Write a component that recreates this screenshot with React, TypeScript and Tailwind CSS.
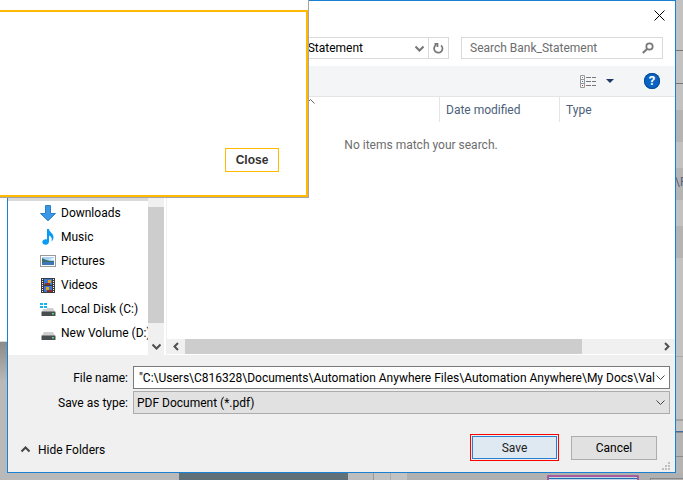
import React from "react";

function Chevron({ dir, className }: { dir: "up" | "down" | "left" | "right"; className?: string }) {
  const d = {
    up: "M.5 6.500 L4.500 2.500 L8.500 6.500",
    down: "M.5 2.500 L4.500 6.500 L8.500 2.500",
    left: "M6 1 L2.5 4.5 L6 8",
    right: "M3 1 L6.5 4.5 L3 8",
  }[dir];
  return (
    <svg viewBox="0 0 9 9" className={"h-[9px] w-[9px] shrink-0 " + (className ?? "")} fill="none" stroke="currentColor" aria-hidden="true">
      <path d={d} />
    </svg>
  );
}

const DownloadIcon = () => (
  <svg viewBox="0 0 16 16" className="h-4 w-4 shrink-0" aria-hidden="true">
    <path d="M5.500 .5h5v8h5L8 15.800.500 8.500h5z" fill="#3a98e6" stroke="#2a7fc9" />
  </svg>
);

const MusicIcon = () => (
  <svg viewBox="0 0 16 16" className="h-4 w-4 shrink-0" aria-hidden="true">
    <path d="M7 0h2c0 3 4.500 4 4.500 8 0 2-1 3.500-2 4.500.8-3 0-5-2.500-6v6c0 2-1.500 3.300-3.500 3.300S2.300 14.500 2.300 13c0-2 2.200-3.200 4.700-2.700z" fill="#0a9bf5" />
  </svg>
);

const PictureIcon = () => (
  <svg viewBox="0 0 16 16" className="h-4 w-4 shrink-0" aria-hidden="true">
    <rect x=".5" y="2.500" width="15" height="11" fill="#fff" stroke="#9a9a9a" />
    <rect x="2" y="4" width="12" height="8" fill="#a9d3f5" />
    <path d="M2 5c3 1 4 3 12 3v2H2z" fill="#3c6f6a" />
    <rect x="2" y="9" width="12" height="3" fill="#3c78b8" />
    <path d="M8 6.500 14 5v2z" fill="#eef7fd" />
  </svg>
);

const VideoIcon = () => (
  <svg viewBox="0 0 16 16" className="h-4 w-4 shrink-0" aria-hidden="true">
    <rect x="1" y="1" width="14" height="15" fill="#3a3a3a" />
    <path d="M2.500 2v14M13.500 2v14" stroke="#fff" strokeDasharray="1 1" />
    <rect x="4" y="2" width="8" height="6" fill="#3b78d8" />
    <rect x="4" y="9" width="8" height="6" fill="#3b78d8" />
    <path d="M8 3h3v3H8zM6 10h3v3H6z" fill="#e3a21a" />
    <path d="M5 6h5v2H5zM7 13h5v2H7z" fill="#8c2f22" />
  </svg>
);

function DriveIcon({ system }: { system?: boolean }) {
  return (
    <svg viewBox="0 0 16 16" className="h-4 w-4 shrink-0" aria-hidden="true">
      <path d="M4 7h9l2 4H1.500z" fill="#cfcfcf" />
      <rect x="1.500" y="10.500" width="14" height="4.500" rx=".5" fill="#4a4d50" />
      <rect x="12" y="12" width="2" height="1.500" fill="#46e070" />
      {system && (
        <g>
          <rect x="0" y="2" width="7" height="6" fill="#fff" />
          <path d="M0 2h3v2H0zM4 2h3v2H4zM0 5h3v2H0zM4 5h3v2H4z" fill="#12b5ee" />
        </g>
      )}
    </svg>
  );
}

const folders = [
  { label: "Downloads", icon: <DownloadIcon /> },
  { label: "Music", icon: <MusicIcon /> },
  { label: "Pictures", icon: <PictureIcon /> },
  { label: "Videos", icon: <VideoIcon /> },
  { label: "Local Disk (C:)", icon: <DriveIcon system /> },
  { label: "New Volume (D:)", icon: <DriveIcon /> },
];

function Backdrop() {
  return (
    <div className="absolute inset-0 flex flex-col" aria-hidden="true">
      <div className="flex flex-1 justify-between">
        <div className="flex w-2 flex-col bg-[#b9b9b9]">
          <div className="h-[342px] border-b border-[#d8d8d8] bg-white" />
          <div className="h-10 bg-linear-to-b from-[#8b8b8b] to-[#b9b9b9]" />
        </div>
        <div className="flex w-2 flex-col bg-[#c2c2c2]">
          <div className="h-[51px] border-b border-[#777]" />
          <div className="h-[33px] border-b border-[#777]" />
          <div className="h-[26px]" />
          <div className="h-8 bg-[#b4b4b4]" />
          <div className="h-[26px]" />
          <div className="h-8 bg-[#b4b4b4] text-[12px] leading-7 text-[#5a6078]">\P</div>
          <div className="h-[26px]" />
          <div className="h-8 bg-[#b4b4b4]" />
          <div className="h-[99px] border-b border-[#aaa]" />
          <div className="h-[64px] border-b-2 border-[#a2a2a2]" />
          <div className="h-[11px] border-b border-[#3f6f9f]" />
          <div className="h-[25px] border-y border-[#8c8c8c] bg-[#b4b4b4]" />
          <div className="flex-1 bg-[#b4b4b4]" />
        </div>
      </div>
      <div className="flex h-[7px] bg-[#b0b0b0]">
        <div className="w-[179px] bg-[#b9b9b9]" />
        <div className="w-[169px] bg-[#5f7078]" />
        <div className="w-[26px] border-r border-[#999] bg-[#bdbdbd]" />
        <div className="w-[17px] border-r border-[#aaa] bg-[#c2c2c2]" />
        <div className="w-[16px] bg-[#c2c2c2]" />
        <div className="flex-1" />
        <div className="mt-[2px] w-[92px] rounded-t-xs border-x-2 border-t-2 border-[#a65a9a] bg-[#c4d4e4]">
          <div className="mt-px h-px bg-[#1f6fb5]" />
        </div>
        <div className="mt-[5px] ml-[11px] w-[33px] border-t border-l border-[#888]" />
      </div>
    </div>
  );
}

export default function App() {
  return (
    <div className="relative min-h-screen overflow-hidden px-[7px] pb-[7px] font-[Roboto,'Noto_Sans',sans-serif] text-[12px] leading-4 text-black">
      <Backdrop />

      <main className="relative flex flex-col border border-[#1a80d2] bg-white">
        <header className="flex h-9 justify-end">
          <button aria-label="Close window" className="flex h-7 w-[31px] items-center justify-center">
            <svg viewBox="0 0 11 11" className="h-[11px] w-[11px]" stroke="#000" aria-hidden="true">
              <path d="M.5 .5 10.500 10.500M10.500 .5 .5 10.500" />
            </svg>
          </button>
        </header>

        <div className="flex h-[29px] gap-3 pr-3 pb-[7px] pl-3">
          <div className="flex flex-1 border border-[#d9d9d9]">
            <div className="flex flex-1 items-center justify-end gap-[52px] pr-1">
              <span>Bank_Statement</span>
              <Chevron dir="down" className="stroke-2 text-[#777]" />
            </div>
            <button aria-label="Refresh" className="flex w-5 items-center justify-center border-l border-[#d9d9d9]">
              <svg viewBox="0 0 11 12" className="h-3 w-[11px]" fill="none" stroke="#777" strokeWidth="1.700" aria-hidden="true">
                <path d="M3 3a4.200 4.200 0 1 0 5 .3M1.500 1.800H4.500V5" />
              </svg>
            </button>
          </div>
          <label className="flex w-[202px] items-center border border-[#d9d9d9] pr-2 pl-2">
            <input aria-label="Search" placeholder="Search Bank_Statement" className="min-w-0 flex-1 outline-none placeholder:text-[#6d6d6d]" />
            <svg viewBox="0 0 12 12" className="h-3 w-3" fill="none" stroke="#777" aria-hidden="true">
              <circle cx="7.500" cy="4.500" r="3.200" strokeWidth="1.700" />
              <path d="M5 7 .8 11" strokeWidth="2" />
            </svg>
          </label>
        </div>

        <div className="flex h-[31px] items-center justify-end border-b border-[#e5e5e5] bg-[#f4f5f7] pr-[15px]">
          <button aria-label="Change view" className="mr-[9px]">
            <svg viewBox="0 0 17 13" className="block h-[13px] w-[17px]" fill="none" aria-hidden="true">
              <path d="M.5 .5h4v12h-4zM.5 4.500h4M.5 8.500h4" stroke="#999" />
              <path d="M6 2.500h5M12 2.500h4M6 6.500h5M12 6.500h4M6 10.500h5M12 10.500h4" stroke="#777" />
              <path d="M2 2h1v1H2z" fill="#4a9" />
              <path d="M2 6h1v1H2z" fill="#27f" />
              <path d="M2 10h1v1H2z" fill="#d22" />
            </svg>
          </button>
          <button aria-label="View options" className="mr-[30px]">
            <svg viewBox="0 0 8 4" className="block h-1 w-2" aria-hidden="true"><path d="M0 0h8L4 4z" fill="#1f3864" /></svg>
          </button>
          <button aria-label="Help" className="flex h-4 w-4 items-center justify-center rounded-full bg-[#0a63c4] text-[13px] font-bold text-white ring-1 ring-[#0a4a90] ring-inset">?</button>
        </div>

        <div className="flex h-[258px]">
          <nav aria-label="Folders" className="flex w-[159px] border-r border-[#f0f0f0]">
            <div className="min-w-0 flex-1 overflow-hidden">
              <div className="mt-20 h-6 bg-[#d9d9d9]" />
              <ul>
                {folders.map((f) => (
                  <li key={f.label} className="flex h-6 items-center gap-[5px] pl-8 whitespace-nowrap">
                    {f.icon}
                    <a href="#">{f.label}</a>
                  </li>
                ))}
              </ul>
            </div>
            <div className="mr-[2px] flex w-4 flex-col items-center bg-[#f0f0f0]">
              <div className="mt-[110px] h-[116px] w-full bg-[#cdcdcd]" />
              <Chevron dir="down" className="mt-[19px] stroke-2 text-[#505050]" />
            </div>
          </nav>
          <section className="flex min-w-0 flex-1 flex-col">
            <div className="flex h-[25px] items-center justify-end text-[#4c607a]">
              <div className="relative flex-1 self-stretch">
                <Chevron dir="up" className="absolute top-0 left-[139px] text-[#666]" />
              </div>
              <div className="flex w-[120px] items-center self-stretch border-l border-[#e5e5e5] pl-[6px]">Date modified</div>
              <div className="flex w-[116px] items-center self-stretch border-l border-[#e5e5e5] pl-[6px]">Type</div>
            </div>
            <p className="flex-1 pt-[15px] text-center text-[#6d6d6d]">No items match your search.</p>
            <div className="mb-px flex h-[15px] items-center bg-[#f0f0f0] pr-1 pl-[5px] text-[#505050]">
              <Chevron dir="left" className="stroke-2" />
              <div className="mx-1 flex h-full flex-1">
                <div className="h-full w-[84%] bg-[#cdcdcd]" />
              </div>
              <Chevron dir="right" className="stroke-2" />
            </div>
          </section>
        </div>

        <form className="flex flex-col bg-[#f0f0f0] pt-[11px] pr-[5px]" onSubmit={(e) => e.preventDefault()}>
          <div className="grid grid-cols-[120px_1fr] items-center gap-x-[5px] gap-y-[2px]">
            <label htmlFor="fname" className="text-right">File name:</label>
            <div className="flex h-[23px] items-center border border-[#7a7a7a] bg-white pr-1">
              <input id="fname" defaultValue={'"C:\\Users\\C816328\\Documents\\Automation Anywhere Files\\Automation Anywhere\\My Docs\\Val'} className="min-w-0 flex-1 pl-[5px] outline-none" />
              <Chevron dir="down" className="text-[#444]" />
            </div>
            <label htmlFor="ftype" className="text-right">Save as type:</label>
            <div className="flex h-[23px] items-center border border-[#acacac] bg-[#e1e1e1] pr-1">
              <select id="ftype" className="min-w-0 flex-1 appearance-none pl-[3px] outline-none">
                <option>PDF Document (*.pdf)</option>
              </select>
              <Chevron dir="down" className="text-[#444]" />
            </div>
          </div>
          <div className="mt-5 flex items-center pr-[13px]">
            <button type="button" className="ml-[13px] flex items-center gap-2 pt-1">
              <Chevron dir="up" className="stroke-2 text-[#444]" />
              Hide Folders
            </button>
            <div className="flex-1" />
            <button className="mr-3 h-[27px] w-[89px] border border-[#ff0000] p-px">
              <span className="flex h-full items-center justify-center border border-[#2a80d0] bg-[#dfe9f2] text-[#222]">Save</span>
            </button>
            <button type="button" className="h-6 w-[86px] border border-[#adadad] bg-[#e1e1e1]">Cancel</button>
          </div>
          <div className="flex h-[11px] justify-end">
            <svg viewBox="0 0 8 8" className="mt-px h-2 w-2" fill="#bfbfbf" aria-hidden="true">
              <path d="M6 0h2v2H6zM3 3h2v2H3zM6 3h2v2H6zM0 6h2v2H0zM3 6h2v2H3zM6 6h2v2H6z" />
            </svg>
          </div>
        </form>
      </main>

      <div role="dialog" aria-label="Message" className="absolute top-0 left-0 h-[198px] w-[309px] border-r border-b border-[#a5a5a5] bg-white pt-[10px]">
        <div className="flex h-full items-end justify-end border-y-2 border-r-2 border-[#ffb900] pr-[27px] pb-[23px]">
          <button className="h-6 w-[54px] border border-[#ffb900] font-['Liberation_Sans',Arial,sans-serif] text-[12px] font-bold text-[#333]">Close</button>
        </div>
      </div>
    </div>
  );
}
